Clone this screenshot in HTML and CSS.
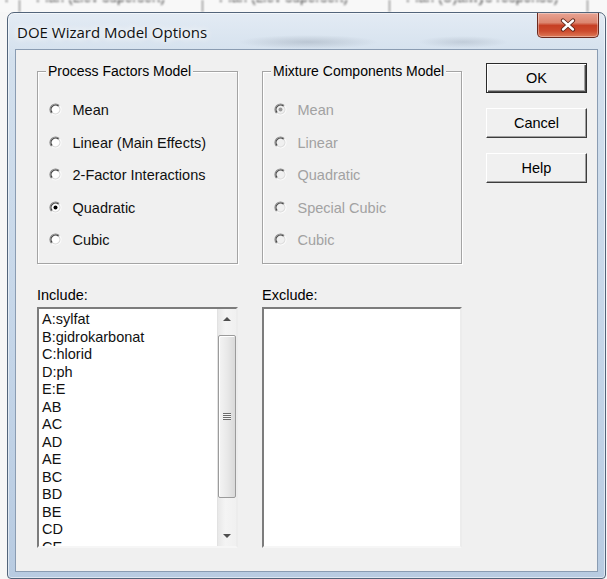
FILE: index.html
```html
<!DOCTYPE html>
<html lang="en">
<head>
<meta charset="utf-8">
<title>DOE Wizard Model Options</title>
<link rel="stylesheet" href="styles.css">
</head>
<body>
<svg class="sprite" aria-hidden="true">
  <symbol id="rb" viewBox="0 0 13 13">
    <circle cx="6.5" cy="6.5" r="5.5" fill="#fff"/>
    <path d="M2.61 10.39 A5.5 5.5 0 0 1 10.39 2.61" fill="none" stroke="#888" stroke-width="1.2"/>
    <path d="M3.32 9.68 A4.5 4.5 0 0 1 9.68 3.32" fill="none" stroke="#404040" stroke-width="1.1"/>
    <path d="M10.39 2.61 A5.5 5.5 0 0 1 2.61 10.39" fill="none" stroke="#fbfbfb" stroke-width="1.2"/>
    <path d="M9.68 3.32 A4.5 4.5 0 0 1 3.32 9.68" fill="none" stroke="#d6d6d6" stroke-width="1.1"/>
  </symbol>
  <symbol id="rb-off" viewBox="0 0 13 13">
    <circle cx="6.5" cy="6.5" r="5.5" fill="#f0f0f0"/>
    <path d="M2.61 10.39 A5.5 5.5 0 0 1 10.39 2.61" fill="none" stroke="#8c8c8c" stroke-width="1.2"/>
    <path d="M3.32 9.68 A4.5 4.5 0 0 1 9.68 3.32" fill="none" stroke="#484848" stroke-width="1.1"/>
    <path d="M10.39 2.61 A5.5 5.5 0 0 1 2.61 10.39" fill="none" stroke="#fbfbfb" stroke-width="1.2"/>
    <path d="M9.68 3.32 A4.5 4.5 0 0 1 3.32 9.68" fill="none" stroke="#dcdcdc" stroke-width="1.1"/>
  </symbol>
</svg>

<div class="desk">
  <div class="desk-strip">
    <div class="cell c1"><span class="ghost">l</span></div>
    <div class="cell c2"><span class="ghost">Plan (Llev supersert)</span></div>
    <div class="cell c3"><span class="ghost">Plan (Llev supersert)</span></div>
    <div class="cell c4"><span class="ghost">Plan (U)alwys response)</span></div>
    <div class="cell c5"></div>
  </div>

  <div class="window">
    <div class="titlebar">
      <span class="title">DOE Wizard Model Options</span>
      <button class="close" type="button" aria-label="Close">
        <svg width="16" height="14" viewBox="0 0 16 14">
          <path d="M3 2.5 L13 11.5 M13 2.5 L3 11.5" stroke="#5a2418" stroke-width="4.2" stroke-linecap="round"/>
          <path d="M3 2.5 L13 11.5 M13 2.5 L3 11.5" stroke="#fff" stroke-width="2.4" stroke-linecap="round"/>
        </svg>
      </button>
    </div>

    <div class="client">
      <div class="group">
        <div class="group-title">Process Factors Model</div>
        <ul class="options">
          <li class="opt"><svg class="rb" viewBox="0 0 13 13"><use href="#rb"/></svg>Mean</li>
          <li class="opt"><svg class="rb" viewBox="0 0 13 13"><use href="#rb"/></svg>Linear (Main Effects)</li>
          <li class="opt"><svg class="rb" viewBox="0 0 13 13"><use href="#rb"/></svg>2-Factor Interactions</li>
          <li class="opt"><svg class="rb" viewBox="0 0 13 13"><use href="#rb"/><circle cx="6.5" cy="6.5" r="2" fill="#000"/></svg>Quadratic</li>
          <li class="opt"><svg class="rb" viewBox="0 0 13 13"><use href="#rb"/></svg>Cubic</li>
        </ul>
      </div>

      <div class="group">
        <div class="group-title">Mixture Components Model</div>
        <ul class="options disabled">
          <li class="opt"><svg class="rb" viewBox="0 0 13 13"><use href="#rb-off"/><circle cx="6.5" cy="6.5" r="2" fill="#9a9a9a"/></svg>Mean</li>
          <li class="opt"><svg class="rb" viewBox="0 0 13 13"><use href="#rb-off"/></svg>Linear</li>
          <li class="opt"><svg class="rb" viewBox="0 0 13 13"><use href="#rb-off"/></svg>Quadratic</li>
          <li class="opt"><svg class="rb" viewBox="0 0 13 13"><use href="#rb-off"/></svg>Special Cubic</li>
          <li class="opt"><svg class="rb" viewBox="0 0 13 13"><use href="#rb-off"/></svg>Cubic</li>
        </ul>
      </div>

      <div class="buttons">
        <button class="btn btn-default" type="button">OK</button>
        <button class="btn" type="button">Cancel</button>
        <button class="btn" type="button">Help</button>
      </div>

      <div class="list-block">
        <div class="list-label">Include:</div>
        <div class="listbox">
          <ul class="items">
            <li>A:sylfat</li>
            <li>B:gidrokarbonat</li>
            <li>C:hlorid</li>
            <li>D:ph</li>
            <li>E:E</li>
            <li>AB</li>
            <li>AC</li>
            <li>AD</li>
            <li>AE</li>
            <li>BC</li>
            <li>BD</li>
            <li>BE</li>
            <li>CD</li>
            <li>CE</li>
            <li>DE</li>
          </ul>
          <div class="vscroll">
            <div class="arrow"><span class="tri up"></span></div>
            <div class="track"><div class="thumb"><span class="grip"></span></div></div>
            <div class="arrow"><span class="tri down"></span></div>
          </div>
        </div>
      </div>

      <div class="list-block">
        <div class="list-label">Exclude:</div>
        <div class="listbox"></div>
      </div>
    </div>
  </div>
</div>
</body>
</html>
```

FILE: styles.css
```css
* {
  box-sizing: border-box;
}

html,
body {
  margin: 0;
  padding: 0;
}

body {
  width: 607px;
  height: 579px;
  overflow: hidden;
  background: #f6f6f6;
  font-family: "Liberation Sans", Arial, sans-serif;
  font-size: 14.5px;
  color: #000;
}

.sprite {
  display: block;
  width: 0;
  height: 0;
  overflow: hidden;
}

/* window behind the dialog, only its lower edge shows */
.desk-strip {
  height: 12px;
  display: flex;
  overflow: hidden;
  background: #f8f8f8;
}

.cell {
  height: 12px;
  overflow: hidden;
  border-left: 1px solid #6a6a6a;
  filter: blur(0.8px);
}

.c1 { width: 19px; border-left: none; }
.c2 { width: 183px; }
.c3 { width: 187px; }
.c4 { width: 198px; }
.c5 { width: 20px; }

.ghost {
  display: block;
  margin-top: -10px;
  padding-left: 16px;
  font-size: 14px;
  line-height: 14px;
  color: #3a3a3a;
  white-space: nowrap;
}

.c1 .ghost { padding-left: 5px; }

/* dialog frame */
.window {
  height: 567px;
  margin: 0 1px 0 7px;
  display: flex;
  flex-direction: column;
  border: 1px solid #52647a;
  border-radius: 7px 7px 4px 4px;
  background:
    radial-gradient(ellipse 70px 7px at 300px 29px, rgba(110, 122, 138, 0.28), transparent),
    radial-gradient(ellipse 45px 6px at 455px 29px, rgba(110, 122, 138, 0.22), transparent),
    linear-gradient(180deg, #e3ebf4 0%, #d3e0ed 8%, #c4d5e8 60%, #b8cbe1 100%);
  box-shadow: inset 0 0 0 1px rgba(255, 255, 255, 0.55);
}

.titlebar {
  height: 36px;
  flex: none;
  display: flex;
  align-items: flex-start;
  justify-content: space-between;
  padding-left: 9px;
}

.title {
  margin-top: 9px;
  font-family: "Open Sans", "Noto Sans", sans-serif;
  font-size: 15px;
  line-height: 20px;
  color: #111;
  text-shadow: 0 0 6px #fff, 0 0 10px #fff;
}

.close {
  width: 62px;
  height: 25px;
  margin-right: 6px;
  padding: 0;
  display: flex;
  align-items: center;
  justify-content: center;
  border: 1px solid #6b2a1f;
  border-top: none;
  border-radius: 0 0 5px 5px;
  background: linear-gradient(180deg, #e8a393 0%, #dc8670 40%, #c63f24 52%, #cc4a2d 75%, #de7a58 100%);
  box-shadow: inset 0 0 0 1px rgba(255, 255, 255, 0.35);
}

/* dialog body */
.client {
  flex: 1;
  margin: 0 7px 6px;
  border: 1px solid #8a9cb2;
  background: #f0f0f0;
  padding: 13px 11px 0 21px;
  display: grid;
  grid-template-columns: 201px 200px 101px;
  grid-template-rows: 201px auto;
  column-gap: 24px;
  row-gap: 23px;
  align-content: start;
}

.group {
  margin-top: 8px;
  height: 193px;
  border: 1px solid #a4a4a4;
  box-shadow: 1px 1px 0 #fff, inset 1px 1px 0 #fff;
}

.group-title {
  width: max-content;
  margin: -9px 0 0 8px;
  padding: 0 2px;
  font-size: 14px;
  line-height: 16px;
  background: #f0f0f0;
}

.options {
  list-style: none;
  margin: 15px 0 0;
  padding: 0 0 0 10.5px;
}

.opt {
  height: 32.5px;
  display: flex;
  align-items: center;
  gap: 11px;
  white-space: nowrap;
  color: #111;
}

.rb {
  width: 13px;
  height: 13px;
  flex: none;
  margin-top: -1px;
}

.disabled .opt {
  color: #a2a2a2;
}

/* push buttons */
.buttons {
  display: flex;
  flex-direction: column;
  gap: 15px;
}

.btn {
  height: 30px;
  padding: 0;
  font: inherit;
  color: #000;
  background: #f0f0f0;
  border: 1px solid;
  border-color: #fff #3c3c3c #3c3c3c #fff;
  box-shadow: inset -1px -1px 0 #a0a0a0;
}

.btn-default {
  border-color: #2a2a2a;
  box-shadow: inset 1px 1px 0 #fff, inset -1px -1px 0 #4a4a4a, inset -2px -2px 0 #a0a0a0;
}

/* list boxes */
.list-label {
  line-height: 16px;
}

.listbox {
  height: 241px;
  margin-top: 4px;
  display: flex;
  background: #fff;
  border: 2px solid;
  border-color: #7c7c7c #ececec #f6f6f6 #7c7c7c;
}

.items {
  flex: 1;
  list-style: none;
  margin: 0;
  padding: 2px 0 0 3px;
  overflow: hidden;
  line-height: 17.5px;
  white-space: nowrap;
  color: #111;
}

.vscroll {
  width: 19px;
  flex: none;
  display: flex;
  flex-direction: column;
  background: linear-gradient(90deg, #e8e8e8, #f4f4f4 40%, #f0f0f0);
  border-left: 1px solid #e2e2e2;
}

.arrow {
  height: 20px;
  flex: none;
  display: flex;
  align-items: center;
  justify-content: center;
}

.tri {
  width: 0;
  height: 0;
  border-left: 4px solid transparent;
  border-right: 4px solid transparent;
}

.tri.up {
  border-bottom: 4px solid #4f4f4f;
}

.tri.down {
  border-top: 4px solid #4f4f4f;
}

.track {
  flex: 1;
  padding-top: 6px;
}

.thumb {
  height: 163px;
  display: flex;
  align-items: center;
  justify-content: center;
  border: 1px solid #9b9b9b;
  border-radius: 2px;
  background: linear-gradient(90deg, #f4f4f4 0%, #e9e9e9 50%, #d9d9d9 100%);
  box-shadow: inset 1px 1px 0 #fff;
}

.grip {
  width: 8px;
  height: 7px;
  background: repeating-linear-gradient(180deg, #6b6b6b 0 1px, #f6f6f6 1px 2px);
}
```
